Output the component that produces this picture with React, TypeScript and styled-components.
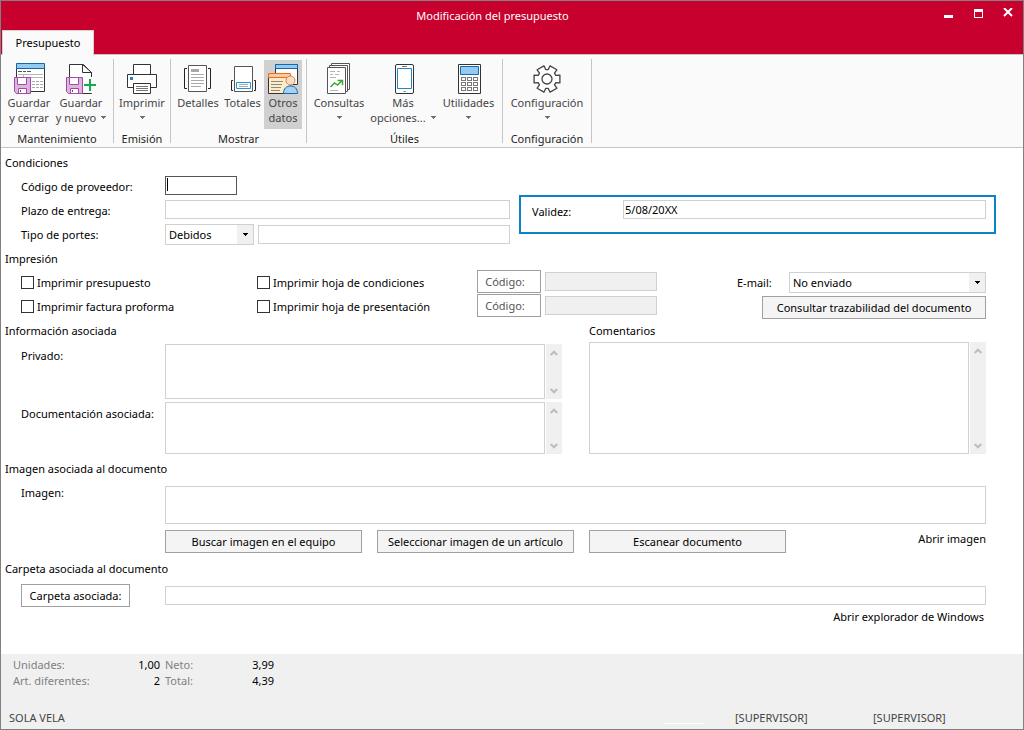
import React from "react";
import styled, { createGlobalStyle } from "styled-components";

const GlobalStyle = createGlobalStyle`
  *, *::before, *::after { box-sizing: border-box; }
  body { margin: 0; background: #fff; }
  body, button, input, select, textarea {
    font-family: "Noto Sans", "Segoe UI", sans-serif;
    font-size: 11px;
    color: #000;
  }
`;

const Window = styled.div`
  min-height: 100vh;
  display: flex;
  flex-direction: column;
  border: 1px solid #808080;
  background: #fff;
`;

/* ---------- title bar ---------- */

const Header = styled.header`
  background: #c8002d;
`;
const TitleBar = styled.div`
  display: flex;
  height: 29px;
  padding-left: 51px;
`;
const Title = styled.h1`
  flex: 1;
  margin: 0;
  color: #fff;
  font-size: 11px;
  font-weight: 400;
  line-height: 29px;
  text-align: center;
`;
const WindowButton = styled.button`
  width: 30px;
  height: 24px;
  padding: 0;
  border: 0;
  background: none;
  svg { display: block; margin: 0 auto; }
`;
const Tabs = styled.nav`
  display: flex;
  height: 24px;
  padding-left: 1px;
`;
const Tab = styled.button`
  position: relative;
  width: 92px;
  height: 25px;
  padding: 0 0 2px;
  border: 1px solid #d8d0d2;
  border-bottom: 0;
  background: #fafafa;
`;

/* ---------- ribbon ---------- */

const Ribbon = styled.div`
  display: flex;
  height: 94px;
  padding-bottom: 4px;
  border-top: 1px solid #c6c6c6;
  border-bottom: 1px solid #c6c6c6;
  background: #fafafa;
`;
const Group = styled.section`
  display: flex;
  flex-direction: column;
  margin-top: 4px;
  border-right: 1px solid #c6c6c6;
`;
const GroupButtons = styled.div<{ $pad?: number }>`
  display: flex;
  flex: 1;
  padding: 1px ${(p) => p.$pad ?? 0}px 0;
`;
const GroupLabel = styled.h2`
  height: 14px;
  margin: 0;
  color: #1e1e1e;
  font-size: 11px;
  font-weight: 400;
  line-height: 20px;
  text-align: center;
`;
const Tool = styled.button<{ $width: number; $active?: boolean }>`
  display: flex;
  flex-direction: column;
  align-items: center;
  width: ${(p) => p.$width}px;
  height: 69px;
  padding: 2px 0 0;
  border: 0;
  background: ${(p) => (p.$active ? "#d0d0d0" : "transparent")};
  color: #444;
  line-height: 15px;
  white-space: nowrap;
  svg { flex: none; display: block; }
`;
const ToolLine = styled.span`
  display: flex;
  align-items: center;
  justify-content: center;
  gap: 5px;
  height: 15px;
`;

/* ---------- form ---------- */

const Form = styled.form`
  flex: 1;
  padding: 3px 37px 24px 4px;
`;
const SectionTitle = styled.h3`
  margin: 0;
  font-size: 11px;
  font-weight: 400;
  line-height: 24px;
`;
const Columns = styled.div<{ $cols: string; $gap: number }>`
  display: grid;
  grid-template-columns: ${(p) => p.$cols};
  gap: ${(p) => p.$gap}px;
`;
const Row = styled.div`
  display: flex;
  min-height: 24px;
  padding-left: 16px;
`;
const Label = styled.label`
  flex: none;
  width: 144px;
  line-height: 24px;
`;
const Controls = styled.div`
  display: flex;
  flex: 1;
  align-items: center;
  align-self: flex-start;
  gap: 4px;
  padding-top: 1px;
`;
const TextField = styled.input<{ $width?: number; $height?: number }>`
  ${(p) => (p.$width ? `width: ${p.$width}px;` : "flex: 1; width: 100%;")}
  min-width: 0;
  height: ${(p) => p.$height ?? 19}px;
  padding: 0 1px;
  border: 1px solid #d0d0d0;
  border-radius: 0;
  outline: 0;
  background: #fff;
  &:disabled { background: #f0f0f0; }
`;
const ActiveField = styled.span`
  position: relative;
  display: flex;
  width: 72px;
  input { border-color: #555; }
  &::before {
    content: "";
    position: absolute;
    left: 2px;
    top: 2px;
    width: 1px;
    height: 13px;
    background: #000;
  }
`;
const SelectBox = styled.span<{ $width: number }>`
  display: grid;
  flex: none;
  width: ${(p) => p.$width}px;
  height: 21px;
  border: 1px solid #d0d0d0;
  select {
    grid-area: 1 / 1;
    appearance: none;
    padding: 0 20px 0 3px;
    border: 0;
    outline: 0;
    background: #fff;
  }
`;
const SelectArrow = styled.span`
  grid-area: 1 / 1;
  justify-self: end;
  display: grid;
  place-items: center;
  width: 16px;
  background: #f0f0f0;
  pointer-events: none;
`;
const Highlight = styled.div`
  display: flex;
  align-items: flex-start;
  align-self: start;
  height: 39px;
  margin: 44px -10px 0 0;
  padding: 3px 8px 0 11px;
  border: 2px solid #0a84c8;
`;
const HighlightLabel = styled.label`
  width: 91px;
  line-height: 24px;
`;
const PrintOptions = styled.div`
  display: flex;
  padding-left: 16px;
`;
const CheckColumn = styled.div<{ $width: number }>`
  width: ${(p) => p.$width}px;
`;
const Check = styled.label`
  display: flex;
  align-items: center;
  gap: 3px;
  height: 24px;
  padding-bottom: 1px;
  input {
    appearance: none;
    width: 13px;
    height: 13px;
    margin: 0;
    border: 1px solid #333;
    background: #fff;
  }
`;
const CodeColumn = styled.div`
  display: flex;
  flex-direction: column;
  gap: 1px;
  margin-top: -1px;
`;
const CodeRow = styled.div`
  display: flex;
  align-items: center;
  gap: 4px;
`;
const MailColumn = styled.div`
  display: flex;
  flex-direction: column;
  align-items: flex-end;
  gap: 3px;
  margin-left: auto;
  padding-top: 1px;
`;
const MailRow = styled.div`
  display: flex;
  align-items: center;
  label { width: 52px; }
`;
const Button = styled.button<{ $width: number; $plain?: boolean; $muted?: boolean }>`
  width: ${(p) => p.$width}px;
  height: 23px;
  padding: 0;
  border: 1px solid #a0a0a0;
  background: ${(p) => (p.$plain ? "#fff" : "#f4f4f4")};
  color: ${(p) => (p.$muted ? "#555" : "#000")};
  white-space: nowrap;
`;
const CodeButton = styled(Button)`
  padding-right: 8px;
`;
const Memo = styled.div<{ $height: number }>`
  display: flex;
  flex: 1;
  gap: 1px;
  height: ${(p) => p.$height}px;
  textarea {
    flex: 1;
    min-width: 0;
    padding: 2px;
    border: 1px solid #d0d0d0;
    outline: 0;
    resize: none;
    overflow: hidden;
  }
`;
const Scroll = styled.div`
  display: flex;
  flex-direction: column;
  justify-content: space-between;
  width: 16px;
  background: #f0f0f0;
  button {
    display: grid;
    place-items: center;
    height: 17px;
    padding: 0;
    border: 0;
    background: none;
  }
`;
const MemoRows = styled.div`
  display: flex;
  flex-direction: column;
  gap: 3px;
  padding-top: 1px;
`;
const CommentTitle = styled.label`
  display: block;
  height: 23px;
  line-height: 24px;
`;
const Block = styled.section<{ $top?: number }>`
  padding-top: ${(p) => p.$top ?? 0}px;
`;
const ImageField = styled(Row)`
  ${Controls} { padding-top: 5px; }
`;
const Actions = styled.div`
  display: flex;
  gap: 15px;
  padding: 6px 0 0 160px;
`;
const Link = styled.a`
  margin-left: auto;
  color: #000;
  line-height: 18px;
  text-decoration: none;
`;
const FolderRow = styled.div`
  display: flex;
  align-items: center;
  gap: 35px;
  padding: 3px 0 0 16px;
`;
const LinkRow = styled.div`
  display: flex;
  padding: 1px 2px 0 0;
`;

/* ---------- footer ---------- */

const Footer = styled.footer`
  display: flex;
  flex-direction: column;
  justify-content: space-between;
  height: 75px;
  padding: 3px 0 2px 8px;
  background: #f0f0f0;
`;
const Totals = styled.dl`
  display: grid;
  grid-template-columns: 92px 55px 56px 58px;
  margin: 0;
  padding-left: 4px;
  line-height: 16px;
  dt { color: #808080; }
  dd { margin: 0; text-align: right; }
  dt:nth-of-type(even) { padding-left: 5px; }
`;
const Status = styled.div`
  display: flex;
  padding-right: 12px;
  color: #444;
  line-height: 18px;
`;
const StatusMark = styled.span`
  align-self: flex-end;
  width: 40px;
  height: 1px;
  margin: 0 31px 3px auto;
  background: #fff;
`;
const StatusCell = styled.span`
  width: 138px;
`;

/* ---------- icons ---------- */

const Icon = ({ children }: { children: React.ReactNode }) => (
  <svg width="32" height="33" viewBox="0 0 32 33" fill="none" aria-hidden="true">
    {children}
  </svg>
);

const Floppy = () => (
  <g>
    <path d="M1.5 15.5h16v16h-14l-2-2z" fill="#ddb6df" stroke="#a24aa6" />
    <path d="M4.5 15.5h9v7h-9z" fill="#fff" stroke="#a24aa6" />
    <path d="M5.5 26.5h8v5h-8z" fill="#fff" stroke="#a24aa6" />
    <path d="M7.5 28v2" stroke="#555" />
  </g>
);

const SaveClose = () => (
  <Icon>
    <path d="M3.5 6.5h28v23h-28z" fill="#fff" stroke="#333" />
    <path d="M3.5 1.5h28v5h-28z" fill="#92caf0" stroke="#1767ab" />
    <path d="M5 9.5h4m1 0h3m1 0h4" stroke="#555" />
    <path d="M5 12.5h25M10.5 12v3M10 15.5h20" stroke="#b5b5b5" />
    <path d="M19 19.5h3m1 0h3m1 0h3M19 22.5h3m1 0h3m1 0h3M19 25.5h3m1 0h3m1 0h3" stroke="#aaa" />
    <Floppy />
  </Icon>
);
const SaveNew = () => (
  <Icon>
    <path d="M4.5 31.5v-29h14l8 8v21h-22" fill="#fff" stroke="#333" />
    <path d="M17.5 2.5v8h9z" fill="#fff" stroke="#333" />
    <path d="M25 15v16M18 23h14" stroke="#fafafa" strokeWidth="4" />
    <path d="M25 17v12M19 23h12" stroke="#16a850" strokeWidth="2" />
    <Floppy />
  </Icon>
);
const Printer = () => (
  <Icon>
    <path d="M7.5 12.5v-10h17v10" fill="#fff" stroke="#333" />
    <path d="M1.5 12.5h29v13h-29z" fill="#fff" stroke="#333" />
    <path d="M4 15h3v3h-3z" fill="#1d86d0" />
    <path d="M7.5 21.5h17v10h-17z" fill="#fff" stroke="#333" />
    <path d="M10 24.5h12M10 26.5h12M10 28.5h12" stroke="#777" />
  </Icon>
);
const Details = () => (
  <Icon>
    <path d="M6.5 3.5h18v26h-18z" fill="#fff" stroke="#555" />
    <path d="M5 6.5h-2.5v20h2.5M26 6.5h2.5v20h-2.5" stroke="#222" />
    <path d="M9 7h8v3h-8z" fill="#a8a8a8" />
    <path d="M9 12.5h13M9 15.5h13M9 18.5h13M9 21.5h13M9 24.5h10" stroke="#aaa" />
  </Icon>
);
const TotalsIcon = () => (
  <Icon>
    <path d="M7.5 4.5h18v25h-18z" fill="#fff" stroke="#555" />
    <path d="M6 18.5h-1.5v10h1.5M27 18.5h1.5v10h-1.5" stroke="#222" />
    <path d="M9.5 20.5h14v6h-14z" fill="#fff" stroke="#2196e0" />
    <path d="M12 22.5h9M12 24.5h9" stroke="#aaa" />
  </Icon>
);
const OtherData = () => (
  <Icon>
    <path d="M8.5 2.5h22v20h-22z" fill="#fff" stroke="#333" />
    <path d="M8.5 2.5h22v4h-22z" fill="#92caf0" stroke="#1767ab" />
    <path d="M1.5 15.5h22v16h-22z" fill="#fdebca" stroke="#333" />
    <path d="M1.5 11.5h22v4h-22z" fill="#f8c9a0" stroke="#ea6c1c" />
    <path d="M4 19.5h12M4 22.5h11M4 25.5h10M4 28.5h9" stroke="#8f8a80" />
    <path d="M16.5 31.5c0-5 3-7.500 7-7.500s7 2.500 7 7.500z" fill="#a6d2f2" stroke="#1767ab" />
    <circle cx="23.5" cy="18.5" r="4.5" fill="#fbdcc0" stroke="#c98658" />
  </Icon>
);
const Reports = () => (
  <Icon>
    <path d="M8.5 1.5h18v26h-18z" fill="#fff" stroke="#555" />
    <path d="M6.5 3.5h18v26h-18z" fill="#fff" stroke="#555" />
    <path d="M4.5 5.5h18v26h-18z" fill="#fff" stroke="#555" />
    <path d="M7 9.5h5m2 0h3M7 12.5h3m2 0h4M7 15.5h6M7 28.5h8" stroke="#b5b5b5" />
    <path d="M7.5 25l4-4 3 2 4.5-4.5M14.5 18.5h5v4.5" stroke="#3fa535" strokeWidth="1.5" />
  </Icon>
);
const Phone = () => (
  <Icon>
    <rect x="8.5" y="2.5" width="18" height="29" rx="1.5" fill="#fff" stroke="#333" />
    <path d="M10.5 6.5h14v20h-14z" stroke="#1d86d0" />
    <path d="M15 4.5h5M16.5 29.5h2" stroke="#777" />
  </Icon>
);
const Calculator = () => (
  <Icon>
    <path d="M5.5 2.5h22v29h-22z" fill="#fff" stroke="#333" />
    <path d="M7.5 4.5h18v8h-18z" fill="#92caf0" stroke="#1767ab" />
    {[15.5, 20.5, 25.5].map((y) =>
      [8.5, 14.5, 20.5].map((x) => (
        <rect key={`${x}-${y}`} x={x} y={y} width="4" height="3" fill="#fff" stroke="#777" />
      ))
    )}
  </Icon>
);

const gearPath = [0, 60, 120, 180, 240, 300]
  .flatMap((angle) =>
    [[-22, 9.5], [-17, 13.5], [17, 13.5], [22, 9.5]].map(([offset, radius]) => {
      const rad = ((angle + offset) * Math.PI) / 180;
      return `${(16 + radius * Math.cos(rad)).toFixed(2)} ${(17 + radius * Math.sin(rad)).toFixed(2)}`;
    })
  )
  .join("L");

const Gear = () => (
  <Icon>
    <path d={`M${gearPath}Z`} stroke="#444" strokeWidth="1.3" strokeLinejoin="round" fill="#fff" />
    <circle cx="16" cy="17" r="5" stroke="#444" strokeWidth="1.3" />
  </Icon>
);

const Caret = ({ color = "#707070" }: { color?: string }) => (
  <svg width="5" height="3" viewBox="0 0 5 3" aria-hidden="true" shapeRendering="crispEdges">
    <path d="M0 0h5v1h-5zM1 1h3v1h-3zM2 2h1v1h-1z" fill={color} />
  </svg>
);

/* ---------- composed parts ---------- */

type ToolButtonProps = {
  icon: React.ReactNode;
  lines: string[];
  width: number;
  menu?: boolean;
  active?: boolean;
};

const ToolButton = ({ icon, lines, width, menu, active }: ToolButtonProps) => (
  <Tool type="button" $width={width} $active={active} aria-pressed={active}>
    {icon}
    <ToolLine>{lines[0]}</ToolLine>
    {(lines[1] || menu) && (
      <ToolLine>
        {lines[1]}
        {menu && <Caret />}
      </ToolLine>
    )}
  </Tool>
);

const MemoField = ({ id, height }: { id: string; height: number }) => (
  <Memo $height={height}>
    <textarea id={id} />
    <Scroll>
      <button type="button" aria-label="Subir">
        <svg width="8" height="6" viewBox="0 0 8 6" fill="none">
          <path d="M.7 5L4 1.700 7.300 5" stroke="#bdbdbd" strokeWidth="2" />
        </svg>
      </button>
      <button type="button" aria-label="Bajar">
        <svg width="8" height="6" viewBox="0 0 8 6" fill="none">
          <path d="M.7 1L4 4.300 7.300 1" stroke="#bdbdbd" strokeWidth="2" />
        </svg>
      </button>
    </Scroll>
  </Memo>
);

type SelectProps = { id: string; width: number; options: string[] };

const Select = ({ id, width, options }: SelectProps) => (
  <SelectBox $width={width}>
    <select id={id}>
      {options.map((option) => (
        <option key={option}>{option}</option>
      ))}
    </select>
    <SelectArrow>
      <Caret color="#000" />
    </SelectArrow>
  </SelectBox>
);

const CheckBox = ({ text }: { text: string }) => (
  <Check>
    <input type="checkbox" />
    {text}
  </Check>
);

export default function App() {
  return (
    <>
      <GlobalStyle />
      <Window>
        <Header>
          <TitleBar>
            <Title>Modificación del presupuesto</Title>
            <WindowButton type="button" aria-label="Minimizar">
              <svg width="10" height="10" viewBox="0 0 10 10">
                <path d="M1 7h9v3h-9z" fill="#fff" />
              </svg>
            </WindowButton>
            <WindowButton type="button" aria-label="Maximizar">
              <svg width="10" height="10" viewBox="0 0 10 10" fill="none">
                <path d="M1 1h9v9h-9zM2 4v5h7v-5z" fill="#fff" fillRule="evenodd" />
              </svg>
            </WindowButton>
            <WindowButton type="button" aria-label="Cerrar">
              <svg width="10" height="10" viewBox="0 0 10 10">
                <path d="M1 0l8 8M9 0l-8 8" stroke="#fff" strokeWidth="2" />
              </svg>
            </WindowButton>
          </TitleBar>
          <Tabs>
            <Tab type="button">Presupuesto</Tab>
          </Tabs>
        </Header>

        <Ribbon>
          <Group>
            <GroupButtons $pad={4}>
              <ToolButton icon={<SaveClose />} lines={["Guardar", "y cerrar"]} width={48} />
              <ToolButton icon={<SaveNew />} lines={["Guardar", "y nuevo"]} width={56} menu />
            </GroupButtons>
            <GroupLabel>Mantenimiento</GroupLabel>
          </Group>
          <Group>
            <GroupButtons>
              <ToolButton icon={<Printer />} lines={["Imprimir"]} width={56} menu />
            </GroupButtons>
            <GroupLabel>Emisión</GroupLabel>
          </Group>
          <Group>
            <GroupButtons $pad={4}>
              <ToolButton icon={<Details />} lines={["Detalles"]} width={46} />
              <ToolButton icon={<TotalsIcon />} lines={["Totales"]} width={43} />
              <ToolButton icon={<OtherData />} lines={["Otros", "datos"]} width={38} active />
            </GroupButtons>
            <GroupLabel>Mostrar</GroupLabel>
          </Group>
          <Group>
            <GroupButtons>
              <ToolButton icon={<Reports />} lines={["Consultas"]} width={64} menu />
              <ToolButton icon={<Phone />} lines={["Más", "opciones..."]} width={64} menu />
              <ToolButton icon={<Calculator />} lines={["Utilidades"]} width={67} menu />
            </GroupButtons>
            <GroupLabel>Útiles</GroupLabel>
          </Group>
          <Group>
            <GroupButtons>
              <ToolButton icon={<Gear />} lines={["Configuración"]} width={88} menu />
            </GroupButtons>
            <GroupLabel>Configuración</GroupLabel>
          </Group>
        </Ribbon>

        <Form>
          <Columns $cols="505fr 467fr" $gap={9}>
            <div>
              <SectionTitle>Condiciones</SectionTitle>
              <Row>
                <Label htmlFor="proveedor">Código de proveedor:</Label>
                <Controls>
                  <ActiveField>
                    <TextField id="proveedor" />
                  </ActiveField>
                </Controls>
              </Row>
              <Row>
                <Label htmlFor="plazo">Plazo de entrega:</Label>
                <Controls>
                  <TextField id="plazo" />
                </Controls>
              </Row>
              <Row>
                <Label htmlFor="portes">Tipo de portes:</Label>
                <Controls>
                  <Select id="portes" width={89} options={["Debidos", "Pagados"]} />
                  <TextField aria-label="Detalle de portes" />
                </Controls>
              </Row>
            </div>
            <Highlight>
              <HighlightLabel htmlFor="validez">Validez:</HighlightLabel>
              <TextField id="validez" defaultValue="5/08/20XX" />
            </Highlight>
          </Columns>

          <Block>
            <SectionTitle>Impresión</SectionTitle>
            <PrintOptions>
              <CheckColumn $width={236}>
                <CheckBox text="Imprimir presupuesto" />
                <CheckBox text="Imprimir factura proforma" />
              </CheckColumn>
              <CheckColumn $width={220}>
                <CheckBox text="Imprimir hoja de condiciones" />
                <CheckBox text="Imprimir hoja de presentación" />
              </CheckColumn>
              <CodeColumn>
                <CodeRow>
                  <CodeButton type="button" $width={64} $plain $muted>Código:</CodeButton>
                  <TextField $width={112} disabled aria-label="Código de condiciones" />
                </CodeRow>
                <CodeRow>
                  <CodeButton type="button" $width={64} $plain $muted>Código:</CodeButton>
                  <TextField $width={112} disabled aria-label="Código de presentación" />
                </CodeRow>
              </CodeColumn>
              <MailColumn>
                <MailRow>
                  <label htmlFor="email">E-mail:</label>
                  <Select id="email" width={197} options={["No enviado", "Enviado"]} />
                </MailRow>
                <Button type="button" $width={224}>Consultar trazabilidad del documento</Button>
              </MailColumn>
            </PrintOptions>
          </Block>

          <Columns $cols="557fr 397fr" $gap={27}>
            <div>
              <SectionTitle>Información asociada</SectionTitle>
              <MemoRows>
                <Row>
                  <Label htmlFor="privado">Privado:</Label>
                  <MemoField id="privado" height={55} />
                </Row>
                <Row>
                  <Label htmlFor="documentacion">Documentación asociada:</Label>
                  <MemoField id="documentacion" height={52} />
                </Row>
              </MemoRows>
            </div>
            <div>
              <CommentTitle htmlFor="comentarios">Comentarios</CommentTitle>
              <MemoField id="comentarios" height={112} />
            </div>
          </Columns>

          <Block $top={3}>
            <SectionTitle>Imagen asociada al documento</SectionTitle>
            <ImageField>
              <Label htmlFor="imagen">Imagen:</Label>
              <Controls>
                <TextField id="imagen" $height={38} />
              </Controls>
            </ImageField>
            <Actions>
              <Button type="button" $width={197}>Buscar imagen en el equipo</Button>
              <Button type="button" $width={197}>Seleccionar imagen de un artículo</Button>
              <Button type="button" $width={197}>Escanear documento</Button>
              <Link href="#imagen">Abrir imagen</Link>
            </Actions>
          </Block>

          <Block $top={4}>
            <SectionTitle>Carpeta asociada al documento</SectionTitle>
            <FolderRow>
              <Button type="button" $width={109} $plain>Carpeta asociada:</Button>
              <TextField aria-label="Carpeta asociada" />
            </FolderRow>
            <LinkRow>
              <Link href="#explorador">Abrir explorador de Windows</Link>
            </LinkRow>
          </Block>
        </Form>

        <Footer>
          <Totals>
            <dt>Unidades:</dt>
            <dd>1,00</dd>
            <dt>Neto:</dt>
            <dd>3,99</dd>
            <dt>Art. diferentes:</dt>
            <dd>2</dd>
            <dt>Total:</dt>
            <dd>4,39</dd>
          </Totals>
          <Status>
            <span>SOLA VELA</span>
            <StatusMark />
            <StatusCell>[SUPERVISOR]</StatusCell>
            <StatusCell>[SUPERVISOR]</StatusCell>
          </Status>
        </Footer>
      </Window>
    </>
  );
}
